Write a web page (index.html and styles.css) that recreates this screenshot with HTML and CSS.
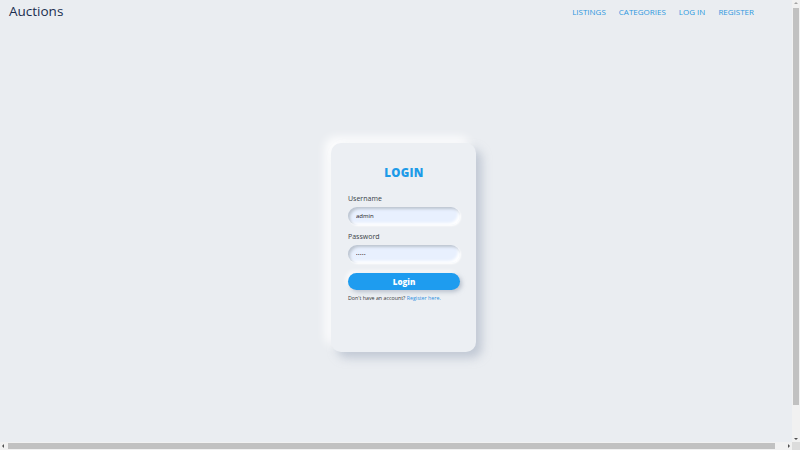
FILE: index.html
```html
<!DOCTYPE html>
<html lang="en">
<head>
<meta charset="utf-8">
<title>Auctions - Login</title>
<link rel="stylesheet" href="styles.css">
</head>
<body>
<div class="page">
  <header class="topbar">
    <a class="brand" href="#">Auctions</a>
    <nav class="nav">
      <a href="#">LISTINGS</a>
      <a href="#">CATEGORIES</a>
      <a href="#">LOG IN</a>
      <a href="#">REGISTER</a>
    </nav>
  </header>
  <main class="main">
    <form class="card">
      <h1 class="title">LOGIN</h1>
      <label class="label" for="u">Username</label>
      <input class="field" id="u" type="text" value="admin">
      <label class="label label-2" for="p">Password</label>
      <input class="field field-pw" id="p" type="password" value="admin">
      <button class="btn" type="button">Login</button>
      <p class="note">Don't have an account? <a href="#">Register here.</a></p>
    </form>
  </main>
</div>
<div class="vscroll" aria-hidden="true">
  <span class="arrow arrow-up"></span>
  <span class="vthumb"></span>
  <span class="arrow arrow-down"></span>
</div>
<div class="hscroll" aria-hidden="true">
  <span class="arrow arrow-left"></span>
  <span class="hthumb"></span>
  <span class="arrow arrow-right"></span>
</div>
<div class="corner" aria-hidden="true"></div>
</body>
</html>
```
FILE: styles.css
```css
html, body {
  margin: 0;
  padding: 0;
  background: #eaedf1;
  font-family: "Open Sans", "Noto Sans", sans-serif;
  overflow: hidden;
}
.page {
  width: 100%;
  height: 100vh;
  display: flex;
  flex-direction: column;
}
.topbar {
  height: 22px;
  flex: none;
  display: flex;
  align-items: center;
  justify-content: space-between;
  padding: 0 46px 0 9px;
  box-sizing: border-box;
}
.brand {
  font-size: 13.5px;
  color: #1a2d4f;
  text-decoration: none;
}
.nav {
  display: flex;
  gap: 13px;
}
.nav a {
  font-size: 8px;
  color: #2d98e0;
  text-decoration: none;
}
.main {
  flex: 1;
  display: flex;
  align-items: center;
  justify-content: center;
  padding-top: 23px;
  padding-left: 7px;
}
.card {
  width: 145px;
  height: 209px;
  box-sizing: border-box;
  padding: 23px 16px 0 17px;
  background: #eceff3;
  border-radius: 10px;
  box-shadow: 6px 6px 10px rgba(160, 172, 190, 0.55), -6px -6px 10px rgba(255, 255, 255, 0.9);
  display: flex;
  flex-direction: column;
}
.title {
  margin: 0 0 14px;
  text-align: center;
  font-size: 11.5px;
  line-height: 14px;
  font-weight: 800;
  color: #1d9be8;
  letter-spacing: 0.3px;
}
.label {
  font-size: 7px;
  line-height: 10px;
  color: #3a3f47;
  margin-bottom: 3px;
}
.label-2 {
  margin-top: 7px;
}
.field {
  height: 18px;
  width: 112px;
  box-sizing: border-box;
  border: none;
  outline: none;
  border-radius: 9px;
  background: #e8f0fe;
  padding: 0 8px;
  font-family: inherit;
  font-size: 6px;
  color: #222;
  box-shadow: inset 2px 2px 3px #bcc4cf, inset -2px -2px 3px #ffffff, 1px 1px 2px #ffffff;
}
.field-pw {
  font-size: 4px;
  letter-spacing: 0.5px;
  color: #222;
}
.btn {
  margin-top: 10px;
  height: 17px;
  width: 112px;
  border: none;
  border-radius: 9px;
  background: #1e9cef;
  color: #fff;
  font-family: inherit;
  font-weight: 800;
  font-size: 8px;
  box-shadow: 2px 2px 4px rgba(150, 162, 180, 0.6), -2px -2px 4px rgba(255, 255, 255, 0.9);
}
.note {
  margin: 4px 0 0;
  font-size: 5.3px;
  line-height: 8px;
  color: #333;
}
.note a {
  color: #2d8fe0;
  text-decoration: none;
}

/* decorative browser scrollbars seen in the capture */
.vscroll {
  position: fixed;
  top: 0;
  right: 0;
  width: 8px;
  height: 442px;
  background: #f1f1f1;
}
.vthumb {
  position: absolute;
  left: 1px;
  right: 1px;
  top: 8px;
  height: 397px;
  background: #c1c1c1;
}
.hscroll {
  position: fixed;
  left: 0;
  bottom: 0;
  width: 792px;
  height: 8px;
  background: #f1f1f1;
}
.hthumb {
  position: absolute;
  top: 1px;
  bottom: 1px;
  left: 8px;
  width: 767px;
  background: #c1c1c1;
}
.corner {
  position: fixed;
  right: 0;
  bottom: 0;
  width: 8px;
  height: 8px;
  background: #dcdcdc;
}
.arrow {
  position: absolute;
  width: 0;
  height: 0;
  border: 2px solid transparent;
}
.arrow-up { top: 2px; left: 2px; border-bottom-color: #a3a3a3; border-top-width: 0; }
.arrow-down { bottom: 2px; left: 2px; border-top-color: #505050; border-bottom-width: 0; }
.arrow-left { left: 2px; top: 2px; border-right-color: #505050; border-left-width: 0; }
.arrow-right { right: 2px; top: 2px; border-left-color: #505050; border-right-width: 0; }
```
